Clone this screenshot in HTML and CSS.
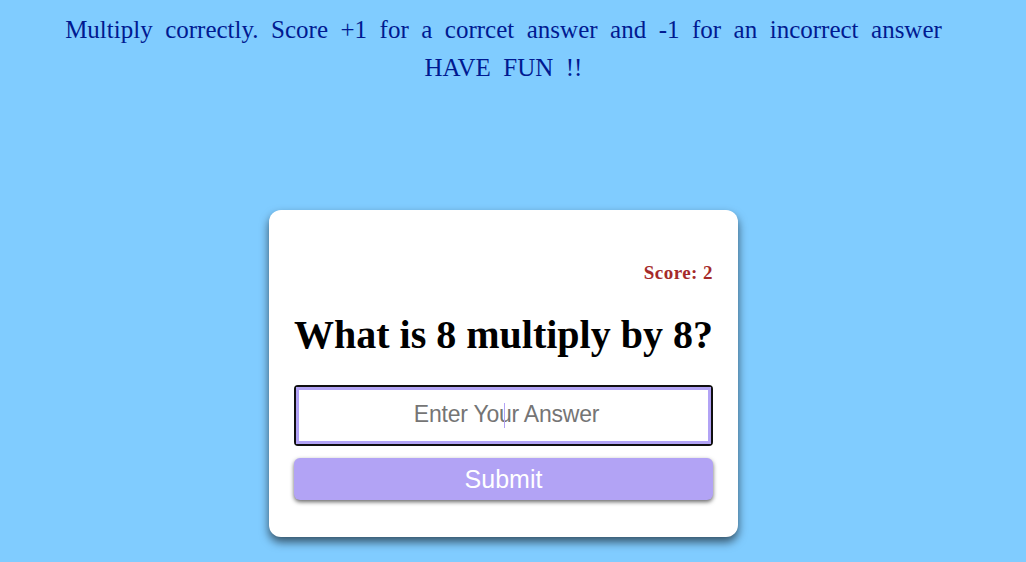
FILE: index.html
```
<!DOCTYPE html>
<html lang="en">
<head>
<meta charset="utf-8">
<title>Multiplication Game</title>
<link rel="stylesheet" href="styles.css">
</head>
<body>
<header class="intro">
<p class="intro-line">Multiply correctly. Score +1 for a corrcet answer and -1 for an incorrect answer</p>
<p class="intro-line">HAVE FUN !!</p>
</header>
<form class="card">
<p class="score">Score: <span>2</span></p>
<h1 class="question">What is 8 multiply by 8?</h1>
<div class="field"><input class="answer" type="text" placeholder="Enter Your Answer" autocomplete="off"><span class="caret"></span></div>
<button class="submit" type="button">Submit</button>
</form>
</body>
</html>
```
FILE: styles.css
```
* { box-sizing: border-box; }
body {
  margin: 0;
  width: 1007px;
  height: 562px;
  overflow: hidden;
  background: #80ccff;
  font-family: "Liberation Serif", "Times New Roman", serif;
  display: flex;
  flex-direction: column;
  align-items: center;
}
html { background: #80ccff; overflow: hidden; }
.intro {
  height: 210px;
  padding-top: 11px;
  color: #001a91;
  text-align: center;
  flex-shrink: 0;
}
.intro-line {
  margin: 0;
  font-size: 25px;
  line-height: 38px;
  word-spacing: 6.25px;
  white-space: nowrap;
}
.card {
  width: 469px;
  height: 327px;
  flex-shrink: 0;
  padding: 52px 25px 0;
  border-radius: 12px;
  background: #fff;
  box-shadow: 0 5px 10px rgba(0, 0, 0, .6);
  display: flex;
  flex-direction: column;
}
.score {
  margin: 0;
  font-size: 19px;
  line-height: 22px;
  letter-spacing: .45px;
  font-weight: bold;
  text-align: right;
  color: #a52a2a;
}
.question {
  margin: 28px 0 0;
  font-size: 40px;
  line-height: 46px;
  white-space: nowrap;
}
.field {
  position: relative;
  margin-top: 27px;
  height: 61px;
  border: 2px solid #101010;
  border-radius: 4px;
  background: #b2a3f5;
}
.answer {
  display: block;
  width: 100%;
  height: 100%;
  padding: 0 0 2px 6px;
  border: 3px solid #b2a3f5;
  outline: 0;
  border-radius: 0;
  background: #fff;
  font: 23px "Liberation Sans", Arial, sans-serif;
  letter-spacing: -.23px;
  text-align: center;
}
.answer::placeholder { color: #757575; }
.caret {
  position: absolute;
  left: 208px;
  top: 16px;
  width: 1px;
  height: 25px;
  background: #b2a3f5;
}
.submit {
  margin: 12px 0 0;
  height: 42px;
  padding: 0;
  border: 0;
  border-radius: 6px;
  background: #b2a3f5;
  box-shadow: 0 2px 4px rgba(0, 0, 0, .6);
  color: #fff;
  font: 25px "Liberation Sans", Arial, sans-serif;
}
```
